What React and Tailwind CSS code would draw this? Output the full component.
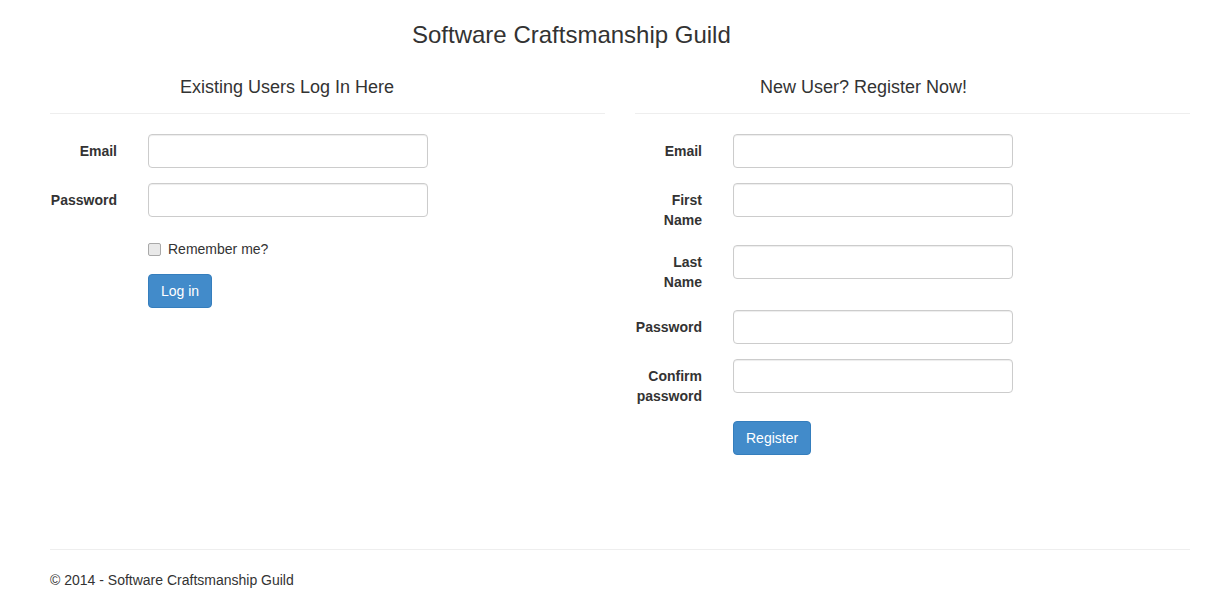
import React from "react";

const Field = ({ label, extra = "" }) => (
    <div className={"flex items-start " + extra}>
        <label className="w-[68px] shrink-0 pt-[7px] pr-[1px] text-right font-bold leading-[20px]">
            {label}
        </label>
        <input
            type="text"
            className="ml-[30px] w-[280px] h-[34px] rounded-[4px] border border-[#cccccc] bg-white px-3 shadow-[inset_0_1px_1px_rgba(0,0,0,0.075)] outline-none"
        />
    </div>
);

const Button = ({ children }) => (
    <button
        type="submit"
        className="h-[34px] rounded-[4px] border border-[#357ebd] bg-[#428bca] px-3 text-[14px] leading-[20px] text-white"
    >
        {children}
    </button>
);

export default function App() {
    return (
        <div
            className="min-h-[605px] bg-white text-[14px] leading-[20px] text-[#333333]"
            style={{ fontFamily: '"Liberation Sans", Arial, sans-serif' }}
        >
            <div className="ml-[50px] w-[1140px]">
                {/* page title */}
                <h2 className="pt-[22px] pl-[362px] text-[24px] leading-[26px] font-normal">
                    Software Craftsmanship Guild
                </h2>

                <div className="flex gap-[30px]">
                    {/* log in column */}
                    <div className="w-[555px]">
                        <h4 className="mt-[29px] pl-[130px] text-[18px] leading-[20px] font-normal">
                            Existing Users Log In Here
                        </h4>
                        <hr className="mt-[16px] mb-[20px] border-0 border-t border-[#eeeeee]" />
                        <form onSubmit={(e) => e.preventDefault()}>
                            <Field label="Email" extra="mb-[15px]" />
                            <Field label="Password" extra="mb-[15px]" />
                            <div className="ml-[98px] mb-[15px] h-[27px] pt-[7px]">
                                <label className="flex items-start gap-[7px] leading-[20px]">
                                    <input
                                        type="checkbox"
                                        className="mt-[4px] h-[13px] w-[13px] appearance-none rounded-[2px] border border-[#a9a9a9] bg-[#e9e9e9]"
                                    />
                                    <span>Remember me?</span>
                                </label>
                            </div>
                            <div className="ml-[98px]">
                                <Button>Log in</Button>
                            </div>
                        </form>
                    </div>

                    {/* register column */}
                    <div className="w-[555px]">
                        <h4 className="mt-[29px] pl-[125px] text-[18px] leading-[20px] font-normal">
                            New User? Register Now!
                        </h4>
                        <hr className="mt-[16px] mb-[20px] border-0 border-t border-[#eeeeee]" />
                        <form onSubmit={(e) => e.preventDefault()}>
                            <Field label="Email" extra="mb-[15px]" />
                            <Field label="First Name" extra="mb-[15px]" />
                            <Field label="Last Name" extra="mb-[18px]" />
                            <Field label="Password" extra="mb-[15px]" />
                            <Field label="Confirm password" extra="mb-[15px]" />
                            <div className="ml-[98px]">
                                <Button>Register</Button>
                            </div>
                        </form>
                    </div>
                </div>

                <hr className="mt-[94px] border-0 border-t border-[#eeeeee]" />
                <footer className="pt-[20px]">
                    <p>&copy; 2014 - Software Craftsmanship Guild</p>
                </footer>
            </div>
        </div>
    );
}
